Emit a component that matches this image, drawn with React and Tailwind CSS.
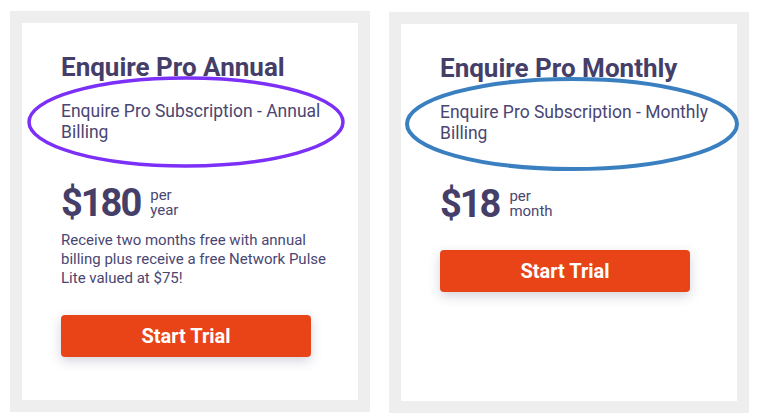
import React from "react";

const plans = [
  {
    name: "Enquire Pro Annual",
    blurb: "Enquire Pro Subscription - Annual Billing",
    price: "$180",
    unit: "year",
    note: "Receive two months free with annual billing plus receive a free Network Pulse Lite valued at $75!",
    ring: { stroke: "#7b2ff7", width: 3.5, cx: 176, cy: 111, rx: 157, ry: 44 },
  },
  {
    name: "Enquire Pro Monthly",
    blurb: "Enquire Pro Subscription - Monthly Billing",
    price: "$18",
    unit: "month",
    note: null,
    ring: { stroke: "#3a7fc0", width: 4, cx: 183, cy: 112, rx: 165, ry: 45 },
  },
];

// Hand-drawn highlight ring laid over the plan blurb
const Ring = ({ stroke, width, cx, cy, rx, ry }) => (
  <svg className="absolute left-0 top-0 pointer-events-none" width="360" height="401">
    <ellipse cx={cx} cy={cy} rx={rx} ry={ry} fill="none" stroke={stroke} strokeWidth={width} />
  </svg>
);

const PlanCard = ({ plan, offset }) => (
  <div className={`relative w-[360px] h-[401px] bg-[#eeeeee] p-3 ${offset}`}>
    <div className="h-full bg-white pl-[39px] pr-[20px] pt-[28px] flex flex-col text-[#443e68]">
      <h2 className="text-[26px] leading-[32px] font-bold">{plan.name}</h2>
      <p className="mt-[18px] text-[17.5px] leading-[21px] text-[#4a4672]">{plan.blurb}</p>

      <div className="mt-[40px] flex items-start gap-[10px]">
        <span className="text-[38px] leading-[40px] font-bold tracking-[-2px]">{plan.price}</span>
        <div className="mt-[5px] flex flex-col text-[15px] leading-[15px] text-[#4a4672]">
          <span>per</span>
          <span>{plan.unit}</span>
        </div>
      </div>

      {plan.note && (
        <p className="mt-[8px] text-[15px] leading-[19px] text-[#4a4672] pr-[6px]">{plan.note}</p>
      )}

      <button
        className={`${plan.note ? "mt-[27px]" : "mt-[26px]"} w-[250px] h-[42px] rounded-[4px] bg-[#e84418] text-white text-[20px] font-bold shadow-[0_4px_12px_rgba(60,50,100,0.22)]`}
      >
        Start Trial
      </button>
    </div>
    <Ring {...plan.ring} />
  </div>
);

export default function App() {
  return (
    <div className="w-[763px] h-[420px] bg-white font-['Roboto',sans-serif] flex gap-[19px] pl-[10px] pt-[11px]">
      <PlanCard plan={plans[0]} offset="" />
      <PlanCard plan={plans[1]} offset="mt-px" />
    </div>
  );
}
